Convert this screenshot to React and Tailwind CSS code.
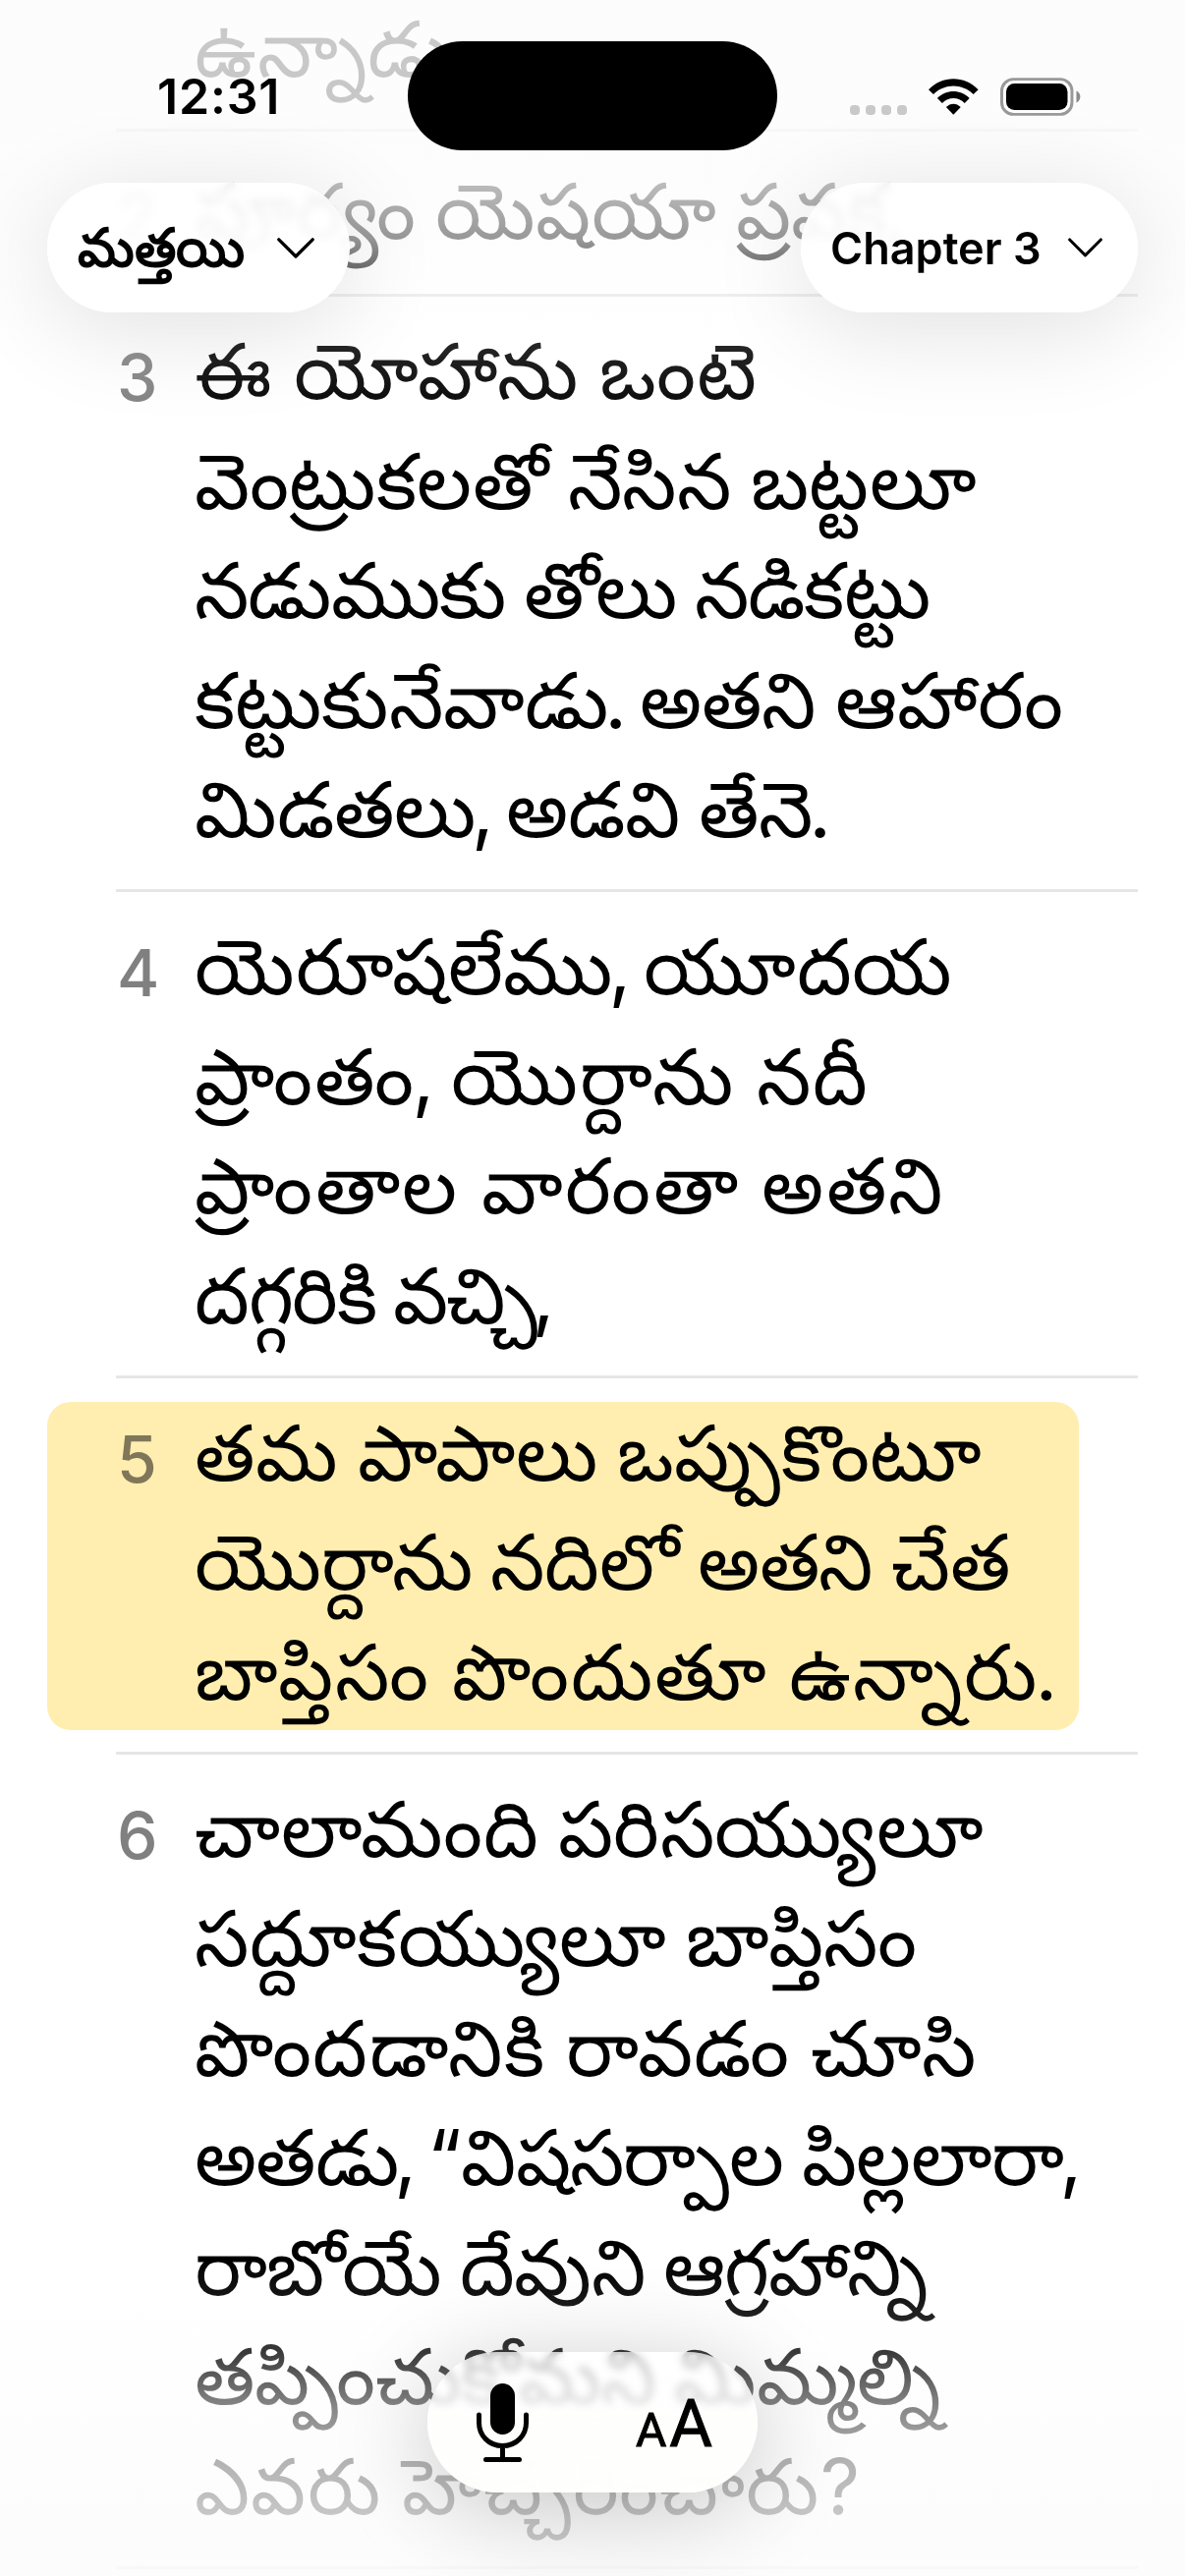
const verses = [
  {
    number: "",
    size: "h-[134px]",
    lines: [{ text: "ఉన్నాడు", track: "tracking-[1px]" }],
  },
  {
    number: "2",
    size: "h-[168px] pb-[25px]",
    lines: [{ text: "పూర్యం యెషయా ప్రవక్త,", track: "tracking-[0.5px]" }],
  },
  {
    number: "3",
    lines: [
      { text: "ఈ యోహాను ఒంటె", track: "tracking-[1.2px]" },
      { text: "వెంట్రుకలతో నేసిన బట్టలూ", track: "tracking-[0.45px]" },
      { text: "నడుముకు తోలు నడికట్టు", track: "tracking-[-0.7px]" },
      { text: "కట్టుకునేవాడు. అతని ఆహారం", track: "tracking-[0.2px]" },
      { text: "మిడతలు, అడవి తేనె.", track: "tracking-normal" },
    ],
  },
  {
    number: "4",
    lines: [
      { text: "యెరూషలేము, యూదయ", track: "tracking-[0.5px]" },
      { text: "ప్రాంతం, యొర్దాను నదీ", track: "tracking-[2.2px]" },
      { text: "ప్రాంతాల వారంతా అతని", track: "tracking-[2.6px]" },
      { text: "దగ్గరికి వచ్చి,", track: "tracking-[-1.5px]" },
    ],
  },
  {
    number: "5",
    highlighted: true,
    lines: [
      { text: "తమ పాపాలు ఒప్పుకొంటూ", track: "tracking-[0.5px]" },
      { text: "యొర్దాను నదిలో అతని చేత", track: "tracking-[-0.2px]" },
      { text: "బాప్తిసం పొందుతూ ఉన్నారు.", track: "tracking-[2.1px]" },
    ],
  },
  {
    number: "6",
    lines: [
      { text: "చాలామంది పరిసయ్యులూ", track: "tracking-[0.5px]" },
      { text: "సద్దూకయ్యులూ బాప్తిసం", track: "tracking-[0.5px]" },
      { text: "పొందడానికి రావడం చూసి", track: "tracking-[1.4px]" },
      { text: "అతడు, “విషసర్పాల పిల్లలారా,", track: "tracking-[-0.6px]" },
      { text: "రాబోయే దేవుని ఆగ్రహాన్ని", track: "tracking-[-0.6px]" },
      { text: "తప్పించుకోమని మిమ్మల్ని", track: "tracking-normal" },
      { text: "ఎవరు హెచ్చరించారు?", track: "tracking-[1.4px]" },
    ],
  },
];

// Commas and full stops sit tight between the Telugu words around them.
function Line({ text, track }) {
  return (
    <p
      className={`h-[111.5px] leading-[111.5px] whitespace-nowrap [word-spacing:-3px] ${track}`}
    >
      {text.split(/([,.])/).map((part, i) =>
        i % 2 ? (
          <span key={i} className="-mr-[7px] -ml-[4px]">
            {part}
          </span>
        ) : (
          part
        ),
      )}
    </p>
  );
}

function Verse({ number, lines, highlighted, size = "pb-[21.5px]" }) {
  return (
    <article
      className={`flex shrink-0 flex-col justify-end border-b-[3px] border-[#e6e6e6] pt-6 ${size} ${
        number ? "" : "pb-[21.5px]"
      }`}
    >
      <div
        className={
          highlighted
            ? "-ml-[70px] mr-[60px] flex rounded-[24px] bg-[#ffeeb0] pl-[70px]"
            : "flex"
        }
      >
        <span
          className={`mt-[3px] -mb-[3px] w-20 shrink-0 pl-[1px] text-[66px] leading-[111.5px] font-medium ${
            highlighted ? "text-[#80775a]" : "text-[#808080]"
          }`}
        >
          {number}
        </span>
        <div className="-mt-[4px] mb-[4px] text-[79px] text-black">
          {lines.map((line) => (
            <Line key={line.text} {...line} />
          ))}
        </div>
      </div>
    </article>
  );
}

function Chevron({ className }) {
  return (
    <svg viewBox="0 0 38 21" fill="none" className={className}>
      <path
        d="M1.8 1.8 19 19 36.2 1.8"
        stroke="currentColor"
        strokeWidth="3.3"
        strokeLinecap="round"
        strokeLinejoin="round"
      />
    </svg>
  );
}

function StatusBar() {
  return (
    <div className="absolute inset-x-0 top-0 flex h-[196px] items-center pl-[160px]">
      <span className="w-[255px] shrink-0 text-[50px] leading-[60px] font-semibold tracking-[0.8px]">
        12:31
      </span>
      <div className="-mt-[2px] h-[111px] w-[376px] shrink-0 rounded-full bg-black" />
      <div className="ml-[74px] flex w-[235px] shrink-0 items-center">
        <div className="mt-[27px] flex gap-1.5">
          {[0, 1, 2, 3].map((dot) => (
            <i key={dot} className="size-2.5 rounded-[4px] bg-[#c9c9c9]" />
          ))}
        </div>
        <svg viewBox="0 0 51 37" className="ml-[22px] h-[37px] w-[51px]">
          <path d="M0 11.2C14-3.7 37-3.7 51 11.2L46 16C34.5 4.5 16.5 4.5 5 16Z" />
          <path d="M9 20C18 10.6 33 10.6 42 20L37 25C30.5 18.5 20.5 18.5 14 25Z" />
          <path d="M18 29.2C22.5 24.7 28.5 24.7 33 29.2L25.5 37Z" />
        </svg>
        <svg viewBox="0 0 83 39" className="ml-[22px] h-[39px] w-[83px]">
          <rect x="1.5" y="1.5" width="72" height="36" rx="12" fill="none" stroke="#999" strokeWidth="3" />
          <rect x="6" y="6" width="63" height="27" rx="8.5" />
          <path d="M78 13.5C83.3 15.5 83.3 23.5 78 25.5Z" fill="#8c8c8c" />
        </svg>
      </div>
    </div>
  );
}

function PickerButton({ children, className }) {
  return (
    <button
      className={`flex h-[132px] items-center justify-between rounded-full bg-linear-to-b from-white/80 to-white/98 to-60% leading-none font-semibold shadow-[0_16px_100px_rgba(0,0,0,0.12)] backdrop-blur-[5px] ${className}`}
    >
      {children}
    </button>
  );
}

function Toolbar() {
  return (
    <div className="absolute bottom-[85px] left-[435px] flex h-[143px] w-[336px] items-center justify-between rounded-full bg-linear-to-b from-white/70 via-white/75 via-35% to-[#fefefc]/97 to-50% pr-[46px] pl-[50px] shadow-[0_16px_100px_rgba(0,0,0,0.22)] backdrop-blur-[4px]">
      <svg viewBox="0 0 53 80" className="h-[80px] w-[53px]" fill="none">
        <rect x="14" y="0" width="25" height="52" rx="12.5" fill="currentColor" />
        <path
          d="M2.500 32v8c0 13 10 23.500 24 23.500s24-10.500 24-23.500v-8M26.500 64v12M9.500 77.500h34"
          stroke="currentColor"
          strokeWidth="5"
          strokeLinecap="round"
        />
      </svg>
      <span className="mt-1 flex items-baseline gap-[3px] font-['Roboto',sans-serif] leading-none font-normal [-webkit-text-stroke:1px_black]">
        <span className="text-[48px]">A</span>
        <span className="text-[67px]">A</span>
      </span>
    </div>
  );
}

export default function App() {
  return (
    <main className="relative h-[2622px] w-[1206px] overflow-hidden bg-white font-['Inter','Noto_Sans',sans-serif] text-black">
      <section className="flex flex-col pr-12 pl-[118px]">
        {verses.map((verse) => (
          <Verse key={verse.number} {...verse} />
        ))}
      </section>

      <div className="absolute inset-x-0 top-0 h-[440px] bg-[linear-gradient(to_bottom,rgba(252,252,252,0.8)_0px,rgba(252,252,252,0.79)_120px,rgba(252,252,252,0.75)_185px,rgba(252,252,252,0.6)_244px,rgba(253,253,253,0.45)_270px,rgba(254,254,254,0.15)_350px,rgba(255,255,255,0)_440px)]" />
      <div className="absolute inset-x-0 bottom-0 h-[322px] bg-[linear-gradient(to_bottom,rgba(255,255,255,0)_0px,rgba(253,253,253,0.1)_45px,rgba(252,252,252,0.22)_92px,rgba(252,252,252,0.52)_147px,rgba(252,252,252,0.7)_200px,rgba(252,252,252,0.79)_260px,rgba(252,252,252,0.82)_322px)]" />

      <StatusBar />

      <nav className="absolute inset-x-12 top-[186px] flex justify-between">
        <PickerButton className="w-[308px] pr-9 pl-[31px] text-[54.5px]">
          <span className="-mt-[2px] leading-[70px]">మత్తయి</span>
          <Chevron className="h-[21px] w-[38px]" />
        </PickerButton>
        <PickerButton className="w-[343px] pr-9 pl-[30px] text-[45px]">
          <span>Chapter 3</span>
          <Chevron className="h-5 w-[35px]" />
        </PickerButton>
      </nav>

      <Toolbar />
    </main>
  );
}
